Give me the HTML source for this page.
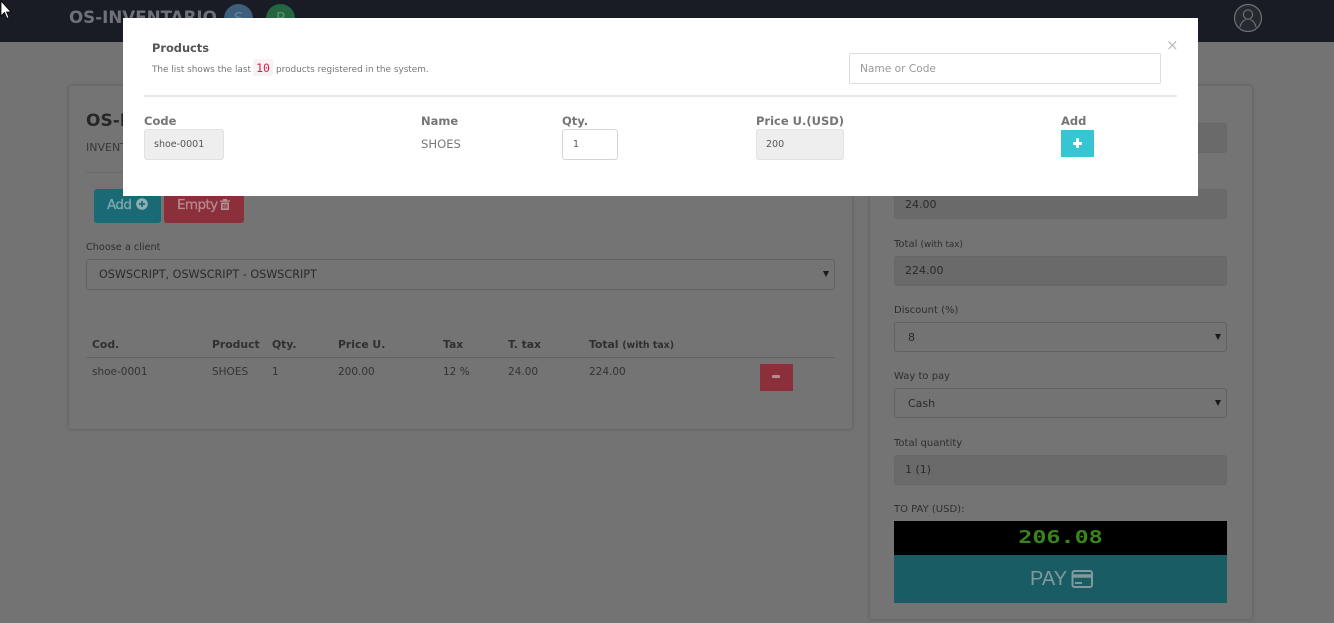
<!DOCTYPE html>
<html><head><meta charset="utf-8"><title>OS-Inventario</title>
<style>
html,body{margin:0;padding:0}
body{position:relative;width:1334px;height:623px;overflow:hidden;background:#737373;font-family:"Liberation Sans",sans-serif;color:#333}
.a{position:absolute;white-space:nowrap}
.card{position:absolute;background:#747474;border-radius:3px;box-shadow:0 0 3px 1px #636363}
.f{position:absolute;box-sizing:border-box;left:894px;width:333px;height:30px;border-radius:3px;font-size:12px;line-height:29px;padding-left:14px;color:#2a2a2a}
.ro{background:#6a6a6a;border:1px solid #666}
.sel{background:#737373;border:1px solid #626262}
.lb{position:absolute;left:894px;font:10px/14px "DejaVu Sans",sans-serif;color:#2e2e2e;white-space:nowrap}
.th{position:absolute;top:338px;font:bold 10.8px/14px "DejaVu Sans",sans-serif;color:#303030;white-space:nowrap}
.td{position:absolute;top:365px;font:10.5px/14px "DejaVu Sans",sans-serif;color:#333;white-space:nowrap}
.mh{position:absolute;top:114px;font:bold 11.5px/14px "DejaVu Sans",sans-serif;color:#757575;white-space:nowrap}
.ar{position:absolute;width:0;height:0;border-left:3px solid transparent;border-right:3px solid transparent;border-top:6px solid #1a1a1a}
.box{position:absolute;box-sizing:border-box;height:31px;top:129px;border-radius:3px;font:9.5px/29px "DejaVu Sans",sans-serif;padding-left:9px;color:#555}
</style></head><body>

<div class="a" style="left:0;top:0;width:1334px;height:42px;background:#191c24"></div>
<div class="a" style="left:69px;top:5px;font:bold 16.7px/24px 'DejaVu Sans',sans-serif;color:#6e7176">OS-INVENTARIO</div>
<div class="a" style="left:224px;top:4px;width:29px;height:29px;border-radius:50%;background:#3d5f7c;color:#678599;font:15px/29px 'DejaVu Sans',sans-serif;text-align:center">S</div>
<div class="a" style="left:266px;top:4px;width:29px;height:29px;border-radius:50%;background:#23663f;color:#5c8e70;font:15px/29px 'DejaVu Sans',sans-serif;text-align:center">P</div>
<svg class="a" style="left:1233px;top:3px" width="30" height="30" viewBox="0 0 30 30" fill="none" stroke="#6e7073" stroke-width="1.2"><circle cx="15" cy="15" r="13.5" fill="#272930"/><circle cx="15" cy="11.5" r="4.6"/><path d="M7 24c1-5 3.5-6.5 5.5-7.500M23 24c-1-5-3.500-6.500-5.500-7.500"/></svg>

<div class="card" style="left:69px;top:86px;width:783px;height:343px"></div>
<div class="a" style="left:86px;top:110px;font:bold 17px/22px 'DejaVu Sans',sans-serif;color:#262626">OS-INVENTARIO</div>
<div class="a" style="left:86px;top:141px;font:11px/14px 'DejaVu Sans',sans-serif;color:#383838">INVENTARIO</div>
<div class="a" style="left:86px;top:172px;width:749px;height:1px;background:#6a6a6a"></div>
<div class="a" style="left:94px;top:189px;width:67px;height:34px;background:#196a75;border-radius:3px"></div>
<div class="a" style="left:107px;top:197px;font:13.5px/16px 'DejaVu Sans',sans-serif;letter-spacing:-.6px;color:#7ea6ab;-webkit-text-stroke:.3px #7ea6ab">Add</div>
<svg class="a" style="left:136px;top:198px" width="12" height="12" viewBox="0 0 12 12"><circle cx="6" cy="6" r="5.800" fill="#90aeb2"/><path d="M6 3v6M3 6h6" stroke="#196a75" stroke-width="1.800"/></svg>
<div class="a" style="left:164px;top:189px;width:80px;height:34px;background:#8b303a;border-radius:3px"></div>
<div class="a" style="left:177px;top:197px;font:13.5px/16px 'DejaVu Sans',sans-serif;letter-spacing:-.6px;color:#b5888e;-webkit-text-stroke:.3px #b5888e">Empty</div>
<svg class="a" style="left:219px;top:198px" width="12" height="12" viewBox="0 0 12 12"><path d="M1 2.500h10v1.200H1zM4 2.500V1h4v1.500M2 4.500h8V12H2z" fill="#b59096"/><path d="M4.200 6v4.500M6 6v4.500M7.800 6v4.500" stroke="#8b303a"/></svg>

<div class="a" style="left:86px;top:241px;font:9.7px/14px 'DejaVu Sans',sans-serif;color:#2e2e2e">Choose a client</div>
<div class="a" style="box-sizing:border-box;left:86px;top:259px;width:749px;height:31px;border:1px solid #626262;border-radius:3px;font:11.2px/29px 'DejaVu Sans',sans-serif;padding-left:12px;color:#2a2a2a">OSWSCRIPT, OSWSCRIPT - OSWSCRIPT</div>
<div class="ar" style="left:823px;top:271px"></div>

<div class="th" style="left:92px">Cod.</div>
<div class="th" style="left:212px">Product</div>
<div class="th" style="left:272px">Qty.</div>
<div class="th" style="left:338px">Price U.</div>
<div class="th" style="left:443px">Tax</div>
<div class="th" style="left:508px">T. tax</div>
<div class="th" style="left:589px">Total <span style="font-size:9.4px">(with tax)</span></div>
<div class="a" style="left:86px;top:357px;width:749px;height:1px;background:#636363"></div>
<div class="td" style="left:92px">shoe-0001</div>
<div class="td" style="left:212px">SHOES</div>
<div class="td" style="left:272px">1</div>
<div class="td" style="left:338px">200.00</div>
<div class="td" style="left:443px">12 %</div>
<div class="td" style="left:508px">24.00</div>
<div class="td" style="left:589px">224.00</div>
<div class="a" style="left:760px;top:364px;width:33px;height:27px;background:#8b303a"></div>
<div class="a" style="left:772px;top:375px;width:8px;height:3px;background:#b58b90;border-radius:1px"></div>

<div class="card" style="left:870px;top:86px;width:382px;height:533px"></div>
<div class="f ro" style="top:123px"></div>
<div class="f ro" style="top:189px;font:11px/29px 'DejaVu Sans',sans-serif;padding-left:10px">24.00</div>
<div class="lb" style="top:238px">Total <span style="font-size:8.8px">(with tax)</span></div>
<div class="f ro" style="top:256px;font:11px/28px 'DejaVu Sans',sans-serif;padding-left:10px">224.00</div>
<div class="lb" style="top:304px">Discount (%)</div>
<div class="f sel" style="top:322px;font:11px/29px 'DejaVu Sans',sans-serif;padding-left:13px">8</div>
<div class="ar" style="left:1215px;top:334px"></div>
<div class="lb" style="top:370px">Way to pay</div>
<div class="f sel" style="top:388px;font:11px/29px 'DejaVu Sans',sans-serif;padding-left:13px">Cash</div>
<div class="ar" style="left:1215px;top:400px"></div>
<div class="lb" style="top:437px">Total quantity</div>
<div class="f ro" style="top:455px;font:11px/28px 'DejaVu Sans',sans-serif;padding-left:10px">1 (1)</div>
<div class="lb" style="top:503px">TO PAY (USD):</div>
<div class="a" style="left:894px;top:521px;width:333px;height:34px;background:#000;text-align:center"><span style="display:inline-block;color:#3a821c;font:bold 18px/33px 'DejaVu Sans Mono','Liberation Mono',monospace;transform:scaleX(1.3)">206.08</span></div>
<div class="a" style="left:894px;top:555px;width:333px;height:48px;background:#1a5c63"></div>
<div class="a" style="left:1030px;top:569px;font:20px/21px 'Liberation Sans',sans-serif;color:#80999d">PAY</div>
<svg class="a" style="left:1071px;top:570px" width="22" height="18" viewBox="0 0 22 18" fill="none" stroke="#80999d" stroke-width="2"><rect x="1.500" y="1" width="19.500" height="16" rx="2"/><path d="M1 6h20" stroke-width="3.500"/><path d="M4 13h7" stroke-width="2"/></svg>

<div class="a" style="left:123px;top:18px;width:1075px;height:177.500px;background:#fff"></div>
<div class="a" style="left:152px;top:41px;font:bold 11.4px/15px 'DejaVu Sans',sans-serif;color:#555">Products</div>
<div class="a" style="left:152px;top:63px;font:8.9px/14px 'DejaVu Sans',sans-serif;color:#777">The list shows the last</div>
<div class="a" style="left:253px;top:59px;width:20px;height:17px;background:#f9f2f4;border-radius:2px;color:#c7254e;font:11.500px/18px 'DejaVu Sans Mono','Liberation Mono',monospace;text-align:center">10</div>
<div class="a" style="left:276px;top:63px;font:8.9px/14px 'DejaVu Sans',sans-serif;color:#777">products registered in the system.</div>
<div class="a" style="box-sizing:border-box;left:849px;top:53px;width:312px;height:31px;border:1px solid #ddd;border-radius:2px;font:10.6px/30px 'DejaVu Sans',sans-serif;padding-left:10px;color:#999">Name or Code</div>
<div class="a" style="left:1166px;top:36px;font:15px/18px 'DejaVu Sans',sans-serif;color:#bbb">×</div>
<div class="a" style="left:144px;top:95px;width:1033px;height:2px;background:#e8e8e8"></div>
<div class="mh" style="left:144px">Code</div>
<div class="mh" style="left:421px">Name</div>
<div class="mh" style="left:562px">Qty.</div>
<div class="mh" style="left:756px">Price U.(USD)</div>
<div class="mh" style="left:1061px">Add</div>
<div class="box" style="left:144px;width:80px;background:#eee;border:1px solid #e2e2e2">shoe-0001</div>
<div class="a" style="left:421px;top:137px;font:11.6px/14px 'DejaVu Sans',sans-serif;color:#777">SHOES</div>
<div class="box" style="left:562px;width:56px;background:#fff;border:1px solid #d5d5d5;color:#555;padding-left:10px">1</div>
<div class="box" style="left:756px;width:88px;background:#eee;border:1px solid #e2e2e2">200</div>
<div class="a" style="left:1061px;top:130px;width:33px;height:27px;background:#36c6d3"></div>
<div class="a" style="left:1073px;top:142px;width:9px;height:3px;background:#fff;border-radius:1px"></div>
<div class="a" style="left:1076px;top:138px;width:3px;height:10px;background:#fff;border-radius:1px"></div>

<svg class="a" style="left:0;top:0" width="12" height="20" viewBox="0 0 12 20"><path d="M1 1v15l3.500-3.500 2.500 6 2-1-2.500-5.500H11z" fill="#fff" stroke="#000" stroke-width=".8"/></svg>
</body></html>
